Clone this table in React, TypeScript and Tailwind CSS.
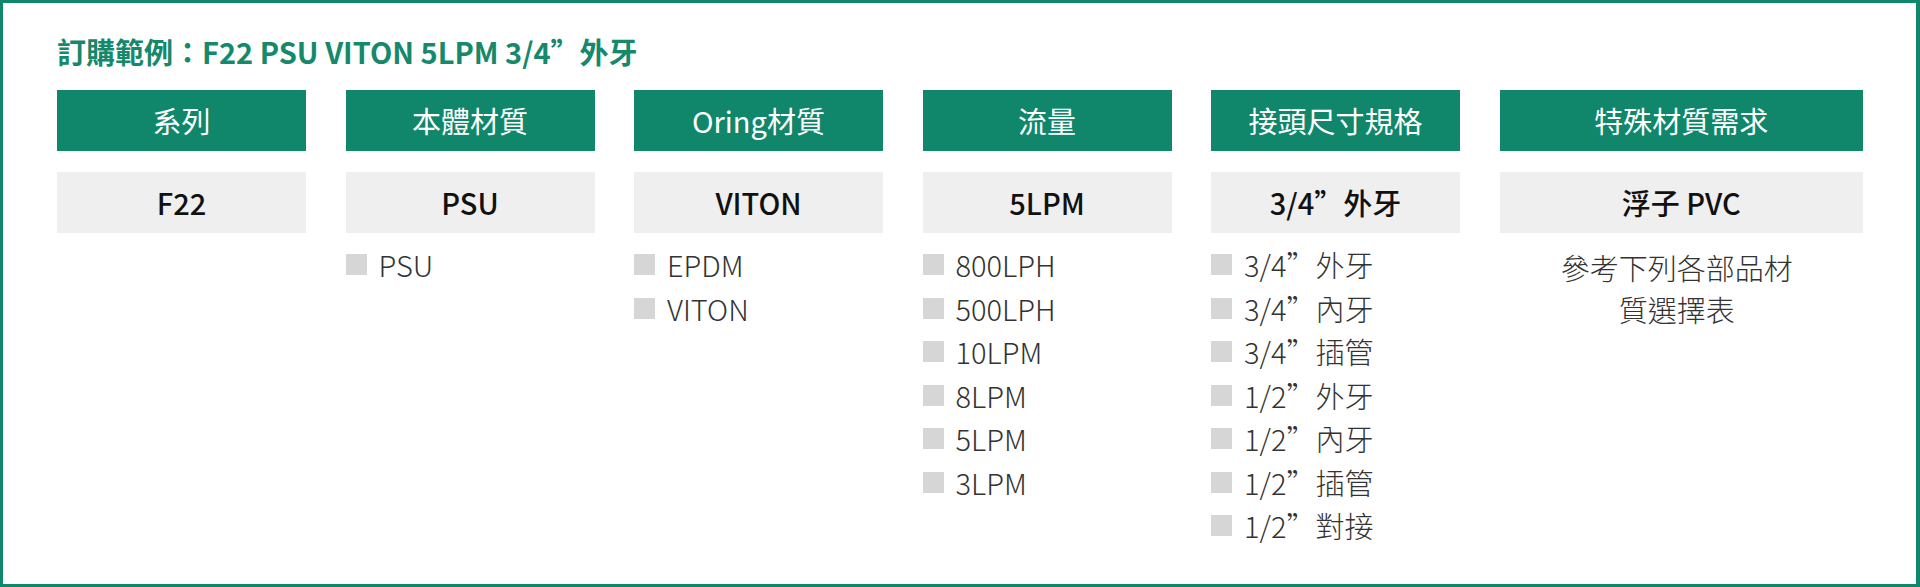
const font = { fontFamily: '"Noto Sans CJK TC", "Noto Sans", sans-serif' };

const columns = [
  { title: "系列", value: "F22", options: [] as string[] },
  { title: "本體材質", value: "PSU", options: ["PSU"] },
  { title: "Oring材質", value: "VITON", options: ["EPDM", "VITON"] },
  {
    title: "流量",
    value: "5LPM",
    options: ["800LPH", "500LPH", "10LPM", "8LPM", "5LPM", "3LPM"],
  },
  {
    title: "接頭尺寸規格",
    value: "3/4”外牙",
    options: [
      "3/4”外牙",
      "3/4”內牙",
      "3/4”插管",
      "1/2”外牙",
      "1/2”內牙",
      "1/2”插管",
      "1/2”對接",
    ],
  },
];

function Column({ title, value, options }: { title: string; value: string; options: string[] }) {
  return (
    <div className="flex w-[249px] shrink-0 flex-col">
      <div className="flex h-[61px] items-center justify-center bg-[#10876a] text-[29px] text-white">
        {title}
      </div>
      <div className="mt-[21px] flex h-[61px] items-center justify-center bg-[#efefef] text-[29px] font-medium text-[#111]">
        {value}
      </div>
      <ul className="mt-[10px] flex flex-col">
        {options.map((opt) => (
          <li key={opt} className="flex h-[43.5px] items-center gap-[12px] text-[29px] font-light text-[#333]">
            <span className="h-[21px] w-[21px] shrink-0 bg-[#d6d6d6]" />
            <span>{opt}</span>
          </li>
        ))}
      </ul>
    </div>
  );
}

export default function App() {
  return (
    <div
      style={font}
      className="box-border h-[587px] w-[1920px] border-[3px] border-r-4 border-[#10876a] bg-white pl-[54px] pr-[53px] pt-[27px]"
    >
      <h2 className="text-[29px] font-bold leading-[42px] text-[#16886b]">
        訂購範例：F22 PSU VITON 5LPM 3/4”外牙
      </h2>
      <div className="mt-[18px] flex gap-[39.5px]">
        {columns.map((c) => (
          <Column key={c.title} {...c} />
        ))}
        <div className="flex flex-1 flex-col">
          <div className="flex h-[61px] items-center justify-center bg-[#10876a] text-[29px] text-white">
            特殊材質需求
          </div>
          <div className="mt-[21px] flex h-[61px] items-center justify-center bg-[#efefef] text-[29px] font-medium text-[#111]">
            浮子 PVC
          </div>
          <p className="mt-[13px] pr-[9px] text-center text-[29px] font-light leading-[42px] text-[#333]">
            參考下列各部品材
            <br />
            質選擇表
          </p>
        </div>
      </div>
    </div>
  );
}
